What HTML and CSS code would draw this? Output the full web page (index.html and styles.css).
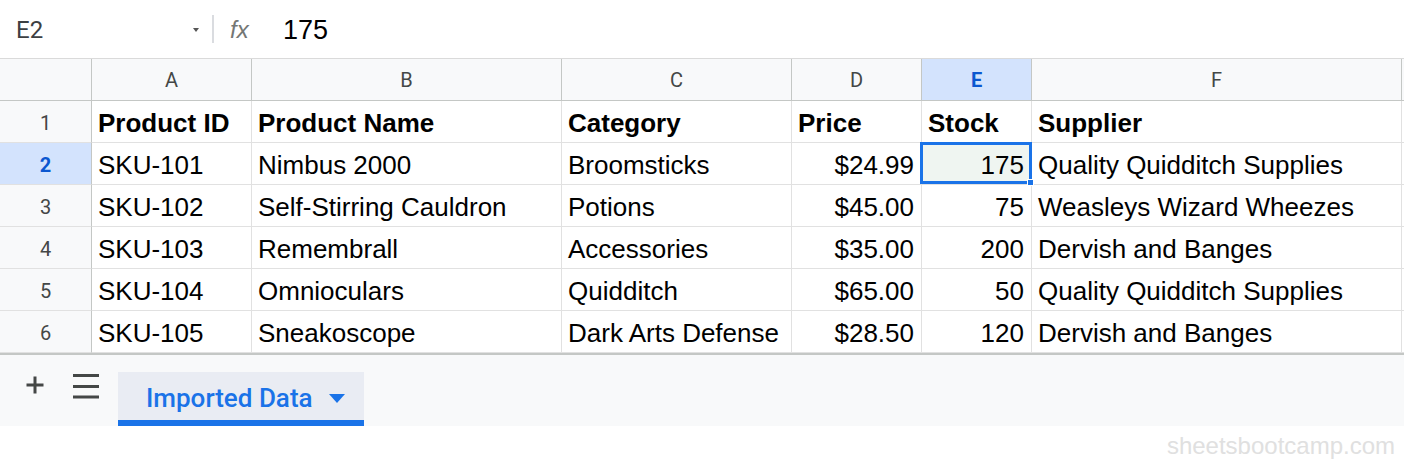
FILE: index.html
```html
<!DOCTYPE html>
<html>
<head>
<meta charset="utf-8">
<link rel="stylesheet" href="styles.css">
</head>
<body>
<div class="app">
  <div class="formula-bar">
    <div class="name-box">
      <span class="name">E2</span>
      <span class="name-arrow"></span>
    </div>
    <div class="fb-divider"></div>
    <span class="fx">fx</span>
    <span class="fb-value">175</span>
  </div>

  <div class="grid">
    <div class="ch corner"></div>
    <div class="ch">A</div>
    <div class="ch">B</div>
    <div class="ch">C</div>
    <div class="ch">D</div>
    <div class="ch sel">E</div>
    <div class="ch">F</div>
    <div class="ch tail"></div>

    <div class="rh">1</div>
    <div class="c b">Product ID</div>
    <div class="c b">Product Name</div>
    <div class="c b">Category</div>
    <div class="c b">Price</div>
    <div class="c b">Stock</div>
    <div class="c b">Supplier</div>
    <div class="c tail"></div>

    <div class="rh sel">2</div>
    <div class="c">SKU-101</div>
    <div class="c">Nimbus 2000</div>
    <div class="c">Broomsticks</div>
    <div class="c r">$24.99</div>
    <div class="c r active">175<span class="handle"></span></div>
    <div class="c">Quality Quidditch Supplies</div>
    <div class="c tail"></div>

    <div class="rh">3</div>
    <div class="c">SKU-102</div>
    <div class="c">Self-Stirring Cauldron</div>
    <div class="c">Potions</div>
    <div class="c r">$45.00</div>
    <div class="c r">75</div>
    <div class="c">Weasleys Wizard Wheezes</div>
    <div class="c tail"></div>

    <div class="rh">4</div>
    <div class="c">SKU-103</div>
    <div class="c">Remembrall</div>
    <div class="c">Accessories</div>
    <div class="c r">$35.00</div>
    <div class="c r">200</div>
    <div class="c">Dervish and Banges</div>
    <div class="c tail"></div>

    <div class="rh">5</div>
    <div class="c">SKU-104</div>
    <div class="c">Omnioculars</div>
    <div class="c">Quidditch</div>
    <div class="c r">$65.00</div>
    <div class="c r">50</div>
    <div class="c">Quality Quidditch Supplies</div>
    <div class="c tail"></div>

    <div class="rh">6</div>
    <div class="c">SKU-105</div>
    <div class="c">Sneakoscope</div>
    <div class="c">Dark Arts Defense</div>
    <div class="c r">$28.50</div>
    <div class="c r">120</div>
    <div class="c">Dervish and Banges</div>
    <div class="c tail"></div>
  </div>

  <div class="tab-bar">
    <div class="tb-icon plus">
      <svg width="20" height="20" viewBox="0 0 20 20"><path d="M10 1.5v17M1.5 10h17" stroke="#444746" stroke-width="3" fill="none"/></svg>
    </div>
    <div class="tb-icon menu">
      <svg width="28" height="28" viewBox="0 0 28 28"><path d="M1 3.5h26M1 14.5h26M1 25h26" stroke="#444746" stroke-width="3" fill="none"/></svg>
    </div>
    <div class="tab">
      <span class="tab-label">Imported Data</span>
      <svg class="tab-caret" width="16" height="9" viewBox="0 0 16 9"><path d="M0 0h16L8 9z" fill="#1a73e8"/></svg>
    </div>
  </div>

  <div class="footer">
    <span class="watermark">sheetsbootcamp.com</span>
  </div>
</div>
</body>
</html>
```

FILE: styles.css
```css
* { box-sizing: border-box; }
html, body { margin: 0; padding: 0; background: #fff; }
body { font-family: "Liberation Sans", Arial, sans-serif; width: 1404px; height: 466px; overflow: hidden; }

.formula-bar {
  height: 59px;
  display: flex;
  align-items: center;
  border-bottom: 1px solid #dadada;
  background: #fff;
  padding-top: 2px;
}
.name-box {
  width: 212px;
  display: flex;
  align-items: center;
  padding-left: 16px;
  padding-right: 13px;
}
.name {
  font-family: Roboto, "Liberation Sans", sans-serif;
  font-size: 24px;
  color: #3c4043;
  flex: 1;
}
.name-arrow {
  width: 0; height: 0;
  border-left: 3px solid transparent;
  border-right: 3px solid transparent;
  border-top: 4px solid #555;
  margin-top: 0;
}
.fb-divider {
  width: 2px;
  height: 28px;
  background: #dadce0;
  margin-top: -2px;
}
.fx {
  font-family: "Liberation Sans", Arial, sans-serif;
  font-style: italic;
  font-size: 24px;
  color: #747775;
  margin-left: 16px;
  width: 53px;
}
.fb-value {
  font-size: 27px;
  color: #000;
}

.grid {
  display: grid;
  grid-template-columns: 92px 160px 310px 230px 130px 110px 370px 1fr;
  grid-auto-rows: 42px;
  border-bottom: 2px solid #c4c7c5;
}
.ch {
  background: #f8f9fa;
  border-right: 1px solid #c4c7c5;
  border-bottom: 1px solid #c4c7c5;
  font-family: Roboto, "Liberation Sans", sans-serif;
  font-size: 20px;
  color: #444746;
  display: flex;
  align-items: center;
  justify-content: center;
}
.ch.sel, .rh.sel {
  background: #d3e3fd;
  color: #0b57d0;
  font-weight: 700;
}
.ch.tail { border-right: none; }
.rh {
  background: #f8f9fa;
  border-right: 1px solid #c4c7c5;
  border-bottom: 1px solid #e1e1e1;
  font-family: Roboto, "Liberation Sans", sans-serif;
  font-size: 20px;
  color: #444746;
  display: flex;
  align-items: center;
  justify-content: center;
  padding-top: 2px;
}
.c {
  border-right: 1px solid #e1e1e1;
  border-bottom: 1px solid #e1e1e1;
  font-size: 26px;
  color: #000;
  display: flex;
  align-items: center;
  padding: 3px 7px 0 6px;
  white-space: nowrap;
  overflow: hidden;
}
.c.tail { border-right: none; }
.c.b { font-weight: 700; }
.c.r { justify-content: flex-end; }
.c.active {
  background: #eff5f1;
  position: relative;
  overflow: visible;
}
.c.active::after {
  content: "";
  position: absolute;
  left: -2px; top: -1px; right: -1px; bottom: 0;
  border: 3px solid #1a73e8;
  pointer-events: none;
}
.handle {
  position: absolute;
  right: -3px;
  bottom: -2px;
  width: 7px;
  height: 7px;
  background: #1a73e8;
  border: 1px solid #fff;
  z-index: 2;
}

.tab-bar {
  height: 71px;
  background: #f8f9fa;
  display: flex;
  align-items: flex-end;
  padding-left: 25px;
}
.tb-icon {
  align-self: flex-start;
  display: flex;
}
.tb-icon.plus { margin-top: 20px; margin-right: 27px; }
.tb-icon.menu { margin-top: 17px; margin-right: 18px; }
.tab {
  width: 246px;
  height: 54px;
  background: #e9ecf3;
  border-bottom: 6px solid #1a73e8;
  display: flex;
  align-items: center;
  padding-left: 28px;
  padding-top: 4px;
}
.tab-label {
  font-family: Roboto, "Liberation Sans", sans-serif;
  font-weight: 500;
  font-size: 26px;
  color: #1a73e8;
  margin-right: 16px;
}
.tab-caret { margin-top: 0; }

.footer {
  height: 40px;
  display: flex;
  justify-content: flex-end;
  align-items: center;
  padding-right: 9px;
}
.watermark {
  font-size: 24px;
  color: #e0e0e0;
}
```
